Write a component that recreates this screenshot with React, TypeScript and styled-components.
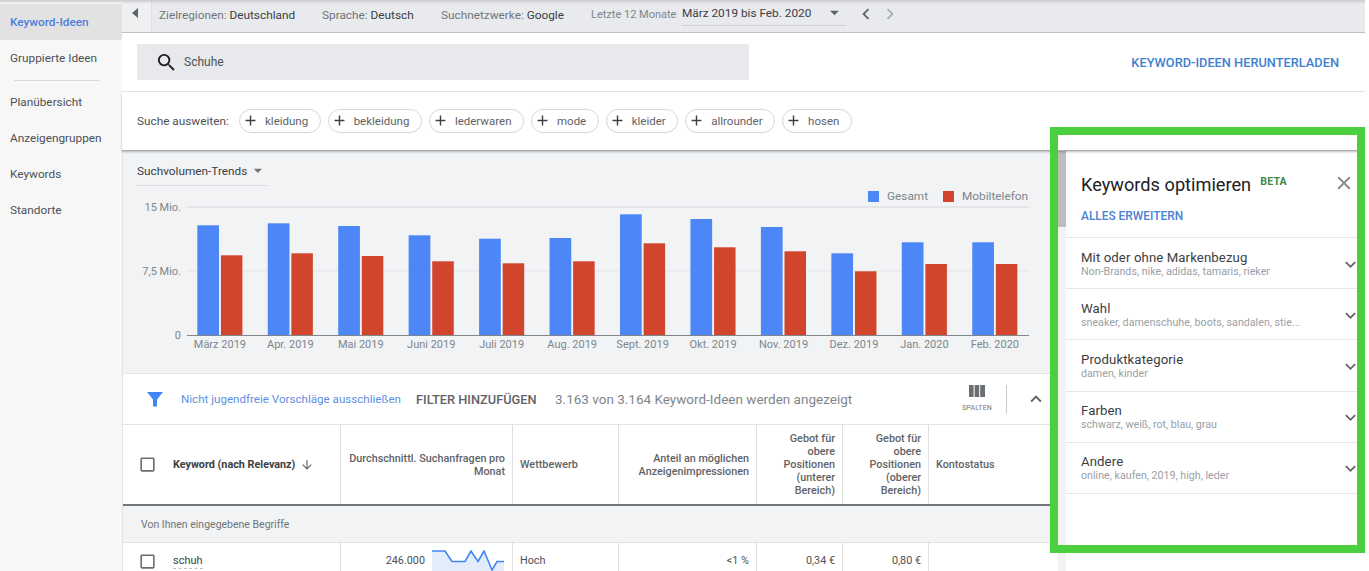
import React from "react";
import styled, { createGlobalStyle } from "styled-components";
import {
  MdAdd,
  MdArrowDownward,
  MdArrowDropDown,
  MdCheckBoxOutlineBlank,
  MdChevronLeft,
  MdChevronRight,
  MdClose,
  MdExpandLess,
  MdExpandMore,
  MdSearch,
} from "react-icons/md";

const GlobalStyle = createGlobalStyle`
  html, body {
    margin: 0;
    background: #ffffff;
  }
  * {
    box-sizing: border-box;
  }
`;

const navTop = ["Keyword-Ideen", "Gruppierte Ideen"];
const navBottom = ["Planübersicht", "Anzeigengruppen", "Keywords", "Standorte"];
const chips = ["kleidung", "bekleidung", "lederwaren", "mode", "kleider", "allrounder", "hosen"];

const months = [
  { label: "März 2019", blue: 225.3, red: 255.3 },
  { label: "Apr. 2019", blue: 223.3, red: 253.3 },
  { label: "Mai 2019", blue: 226, red: 256 },
  { label: "Juni 2019", blue: 235.3, red: 261.3 },
  { label: "Juli 2019", blue: 238.7, red: 263.3 },
  { label: "Aug. 2019", blue: 238, red: 261.3 },
  { label: "Sept. 2019", blue: 214.3, red: 243.3 },
  { label: "Okt. 2019", blue: 219, red: 247.3 },
  { label: "Nov. 2019", blue: 227, red: 251.3 },
  { label: "Dez. 2019", blue: 253.3, red: 271.3 },
  { label: "Jan. 2020", blue: 242.3, red: 264 },
  { label: "Feb. 2020", blue: 242.3, red: 264 },
];

const groups = [
  { title: "Mit oder ohne Markenbezug", sub: "Non-Brands, nike, adidas, tamaris, rieker" },
  { title: "Wahl", sub: "sneaker, damenschuhe, boots, sandalen, stie..." },
  { title: "Produktkategorie", sub: "damen, kinder" },
  { title: "Farben", sub: "schwarz, weiß, rot, blau, grau" },
  { title: "Andere", sub: "online, kaufen, 2019, high, leder" },
];

function TrendChart() {
  // coordinates are page y minus the svg top (200)
  const base = 135;
  return (
    <ChartSvg width="935" height="165" viewBox="0 0 935 165">
      <line x1="64" x2="906" y1="7" y2="7" stroke="#d5d7da" />
      <line x1="64" x2="906" y1="71" y2="71" stroke="#e3e5e8" />
      {[
        ["15 Mio.", 7],
        ["7,5 Mio.", 71],
        ["0", 135],
      ].map(([text, y]) => (
        <text key={text} x="58" y={Number(y) + 4} textAnchor="end" fontSize="11" fill="#80868b">
          {text}
        </text>
      ))}
      {months.map((m, i) => {
        const x = 74.3 + i * 70.45;
        const blueTop = m.blue - 200;
        const redTop = m.red - 200;
        return (
          <g key={m.label}>
            <rect x={x} y={blueTop} width="21.7" height={base - blueTop} fill="#4d86f7" />
            <rect x={x + 23.6} y={redTop} width="21.5" height={base - redTop} fill="#d0452b" />
            <text x={x + 22.6} y="148" textAnchor="middle" fontSize="11" fill="#80868b">
              {m.label}
            </text>
          </g>
        );
      })}
      <line x1="64" x2="906" y1="135.5" y2="135.5" stroke="#80868b" />
    </ChartSvg>
  );
}

function Sparkline() {
  return (
    <SparkSvg width="72" height="28" viewBox="0 0 72 28">
      <path
        d="M0 1H13L20 11.5H33L39 1L46 11.5L52 1L60 20L65 11.5H72V28H0Z"
        fill="#e3ecfb"
      />
      <path
        d="M0 1H13L20 11.5H33L39 1L46 11.5L52 1L60 20L65 11.5H72"
        fill="none"
        stroke="#4285f4"
        strokeWidth="1.6"
      />
    </SparkSvg>
  );
}

export default function App() {
  return (
    <Page>
      <GlobalStyle />
      <Sidebar>
        {navTop.map((item, i) => (
          <NavItem key={item} $active={i === 0}>
            {item}
          </NavItem>
        ))}
        <NavDivider />
        {navBottom.map((item) => (
          <NavItem key={item}>{item}</NavItem>
        ))}
      </Sidebar>

      <Main>
        <TopBar>
          <CollapseButton>
            <CollapseArrow />
          </CollapseButton>
          <TopInfo $width={163}>
            <TopLabel>Zielregionen:</TopLabel> Deutschland
          </TopInfo>
          <TopInfo $width={119}>
            <TopLabel>Sprache:</TopLabel> Deutsch
          </TopInfo>
          <TopInfo $width={150}>
            <TopLabel>Suchnetzwerke:</TopLabel> Google
          </TopInfo>
          <RangeLabel>Letzte 12 Monate</RangeLabel>
          <RangeSelect>
            März 2019 bis Feb. 2020
            <MdArrowDropDown size={21} color="#5f6368" />
          </RangeSelect>
          <PagerIcon $dim={false}>
            <MdChevronLeft size={22} />
          </PagerIcon>
          <PagerIcon $dim>
            <MdChevronRight size={22} />
          </PagerIcon>
        </TopBar>

        <SearchRow>
          <SearchBox>
            <MdSearch size={23} color="#202124" />
            <span>Schuhe</span>
          </SearchBox>
          <DownloadLink>KEYWORD-IDEEN HERUNTERLADEN</DownloadLink>
        </SearchRow>

        <ChipRow>
          <ChipLabel>Suche ausweiten:</ChipLabel>
          {chips.map((chip) => (
            <Chip key={chip}>
              <MdAdd size={17} color="#3c4043" />
              <span>{chip}</span>
            </Chip>
          ))}
        </ChipRow>

        <Body>
          <Content>
            <ChartSection>
              <ChartHead>
                <TrendSelect>
                  Suchvolumen-Trends
                  <MdArrowDropDown size={21} color="#757575" />
                </TrendSelect>
                <Legend>
                  <LegendSwatch $color="#4d86f7" />
                  <LegendText>Gesamt</LegendText>
                  <LegendSwatch $color="#d0452b" />
                  <LegendText>Mobiltelefon</LegendText>
                </Legend>
              </ChartHead>
              <TrendChart />
            </ChartSection>

            <FilterRow>
              <FunnelIcon width="18" height="16" viewBox="0 0 18 16">
                <path d="M1 1H17L11 8.5V15.5H7V8.5Z" fill="#4285f4" />
              </FunnelIcon>
              <AdultFilter>Nicht jugendfreie Vorschläge ausschließen</AdultFilter>
              <AddFilter>FILTER HINZUFÜGEN</AddFilter>
              <ResultCount>3.163 von 3.164 Keyword-Ideen werden angezeigt</ResultCount>
              <ColumnsButton>
                <svg width="16" height="12" viewBox="0 0 16 12">
                  <path d="M0 0H4.6V12H0ZM5.6 0H10.2V12H5.6ZM11.2 0H16V12H11.2Z" fill="#6b6f73" />
                </svg>
                <span>SPALTEN</span>
              </ColumnsButton>
              <FilterDivider />
              <MdExpandLess size={22} color="#5f6368" />
            </FilterRow>

            <HeaderRow>
              <KeywordHead>
                <MdCheckBoxOutlineBlank size={19} color="#6b6b6b" />
                <strong>Keyword (nach Relevanz)</strong>
                <MdArrowDownward size={14} color="#5f6368" />
              </KeywordHead>
              <HeadCell $right>Durchschnittl. Suchanfragen pro Monat</HeadCell>
              <HeadCell>Wettbewerb</HeadCell>
              <HeadCell $right>Anteil an möglichen Anzeigenimpressionen</HeadCell>
              <HeadCell $right>Gebot für obere Positionen (unterer Bereich)</HeadCell>
              <HeadCell $right>Gebot für obere Positionen (oberer Bereich)</HeadCell>
              <HeadCell $last>Kontostatus</HeadCell>
            </HeaderRow>

            <GroupRow>Von Ihnen eingegebene Begriffe</GroupRow>

            <DataRow>
              <KeywordCell>
                <MdCheckBoxOutlineBlank size={19} color="#6b6b6b" />
                <KeywordText>schuh</KeywordText>
              </KeywordCell>
              <VolumeCell>
                246.000
                <Sparkline />
              </VolumeCell>
              <DataCell>Hoch</DataCell>
              <DataCell $right>&lt;1 %</DataCell>
              <DataCell $right>0,34 €</DataCell>
              <DataCell $right>0,80 €</DataCell>
              <DataCell $last />
            </DataRow>
          </Content>

          <ScrollStrip>
            <ScrollThumb />
          </ScrollStrip>

          <SidePanel>
            <PanelHead>
              <PanelTitleRow>
                <PanelTitle>Keywords optimieren</PanelTitle>
                <BetaTag>BETA</BetaTag>
                <CloseIcon>
                  <MdClose size={22} color="#858585" />
                </CloseIcon>
              </PanelTitleRow>
              <ExpandAll>ALLES ERWEITERN</ExpandAll>
            </PanelHead>
            {groups.map((group) => (
              <GroupItem key={group.title}>
                <GroupText>
                  <GroupTitle>{group.title}</GroupTitle>
                  <GroupSub>{group.sub}</GroupSub>
                </GroupText>
                <MdExpandMore size={21} color="#5f6368" />
              </GroupItem>
            ))}
          </SidePanel>
        </Body>
      </Main>

      <GreenFrame />
    </Page>
  );
}

const Page = styled.div`
  position: relative;
  display: flex;
  width: 1365px;
  height: 571px;
  overflow: hidden;
  font-family: Roboto, "Liberation Sans", sans-serif;
  color: #3c4043;
  background: #ffffff;

  &::before {
    content: "";
    position: absolute;
    inset: 0 0 auto 0;
    height: 4px;
    background: linear-gradient(#c9cbce, rgba(201, 203, 206, 0));
    z-index: 3;
  }
`;

const GreenFrame = styled.div`
  position: absolute;
  left: 1050px;
  top: 127px;
  width: 315px;
  height: 426px;
  border: 8px solid #4ccf3f;
  z-index: 4;
`;

const Sidebar = styled.nav`
  flex: 0 0 122px;
  padding-top: 4px;
  background: #f7f7f7;
`;

const NavItem = styled.div<{ $active?: boolean }>`
  height: 36px;
  padding: 0 0 1px 10px;
  display: flex;
  align-items: center;
  font-size: 11.8px;
  color: ${({ $active }) => ($active ? "#4a7fdc" : "#4d5156")};
  background: ${({ $active }) => ($active ? "#e2e2e2" : "transparent")};
  font-weight: ${({ $active }) => ($active ? 500 : 400)};
`;

const NavDivider = styled.div`
  width: 86px;
  height: 1px;
  margin: 4px 0 3px 14px;
  background: #d9d9d9;
`;

const Main = styled.div`
  flex: 1;
  min-width: 0;
  display: flex;
  flex-direction: column;
`;

const TopBar = styled.div`
  height: 33px;
  flex: none;
  display: flex;
  align-items: center;
  background: #e8eaed;
  border-bottom: 1px solid #bdbfc2;
  font-size: 11.8px;
`;

const CollapseButton = styled.div`
  width: 30px;
  height: 32px;
  margin-right: 7px;
  display: flex;
  align-items: center;
  justify-content: center;
  background: #eff0f2;
  border-right: 1px solid #dcdee1;
`;

const CollapseArrow = styled.div`
  width: 0;
  height: 0;
  margin: -7px 3px 0 0;
  border-style: solid;
  border-width: 5.5px 6px 5.5px 0;
  border-color: transparent #5f6368 transparent transparent;
`;

const TopInfo = styled.div<{ $width: number }>`
  width: ${({ $width }) => $width}px;
  margin-top: -2px;
  color: #3c4043;
  white-space: nowrap;
`;

const TopLabel = styled.span`
  color: #70757a;
`;

const RangeLabel = styled.div`
  width: 91px;
  margin-top: -3px;
  font-size: 11px;
  color: #80868b;
  white-space: nowrap;
`;

const RangeSelect = styled.div`
  width: 164px;
  height: 25px;
  margin-top: -6px;
  padding-right: 1px;
  display: flex;
  align-items: center;
  justify-content: space-between;
  border-bottom: 1px solid #cfd1d4;
  color: #3c4043;
  white-space: nowrap;
`;

const PagerIcon = styled.div<{ $dim: boolean }>`
  display: flex;
  margin: -4px 0 0 ${({ $dim }) => ($dim ? "2px" : "9px")};
  color: ${({ $dim }) => ($dim ? "#a9acb0" : "#5f6368")};
`;

const SearchRow = styled.div`
  height: 59px;
  flex: none;
  padding: 11px 26px 0 15px;
  display: flex;
  justify-content: space-between;
  border-bottom: 1px solid #e8e8e8;
`;

const SearchBox = styled.div`
  width: 612px;
  height: 36px;
  padding-left: 18px;
  display: flex;
  align-items: center;
  gap: 6px;
  background: #e8e9ec;
  font-size: 12px;
  color: #4d5156;
`;

const DownloadLink = styled.div`
  height: 36px;
  display: flex;
  align-items: center;
  font-size: 12.8px;
  font-weight: 500;
  color: #3f7fd0;
`;

const ChipRow = styled.div`
  height: 59px;
  flex: none;
  padding: 0 0 1px 15px;
  display: flex;
  align-items: center;
  gap: 7px;
  border-bottom: 1px solid #a9abae;
  box-shadow: 0 1px 2px rgba(60, 64, 67, 0.35);
  position: relative;
  z-index: 1;
`;

const ChipLabel = styled.div`
  width: 95px;
  flex: none;
  font-size: 11.8px;
  color: #4d5156;
  white-space: nowrap;
`;

const Chip = styled.div`
  height: 24px;
  padding: 0 11.5px 0 2px;
  display: flex;
  align-items: center;
  gap: 6px;
  border: 1px solid #d4d6d9;
  border-radius: 12px;
  font-size: 11.5px;
  color: #5f6368;
`;

const Body = styled.div`
  flex: 1;
  min-height: 0;
  display: flex;
`;

const Content = styled.div`
  width: 936px;
  flex: none;
  border-left: 1px solid #e4e4e4;
`;

const ChartSection = styled.section`
  height: 223px;
  background: #f1f3f5;
  border-bottom: 1px solid #e6e6e6;
`;

const ChartHead = styled.div`
  height: 49px;
  padding: 0 30px 0 14px;
  display: flex;
  justify-content: space-between;
  align-items: flex-start;
`;

const TrendSelect = styled.div`
  width: 131px;
  height: 35px;
  padding-top: 5px;
  display: flex;
  align-items: center;
  gap: 1px;
  border-bottom: 1px solid #dadce0;
  font-size: 11.8px;
  color: #3c4043;
  white-space: nowrap;
`;

const Legend = styled.div`
  margin-top: 38px;
  display: flex;
  align-items: center;
`;

const LegendSwatch = styled.span<{ $color: string }>`
  width: 11px;
  height: 11px;
  margin-right: 8px;
  background: ${({ $color }) => $color};
`;

const LegendText = styled.span`
  font-size: 11.8px;
  line-height: 14px;
  color: #80868b;
  & + span {
    margin-left: 15px;
  }
`;

const ChartSvg = styled.svg`
  display: block;
  font-family: Roboto, "Liberation Sans", sans-serif;
`;

const FilterRow = styled.div`
  height: 51px;
  padding: 0 11px 0 23px;
  display: flex;
  align-items: center;
  border-bottom: 1px solid #e2e2e2;
`;

const FunnelIcon = styled.svg`
  flex: none;
  margin-right: 17px;
`;

const AdultFilter = styled.div`
  width: 235px;
  font-size: 11.6px;
  color: #5f8fe0;
  white-space: nowrap;
`;

const AddFilter = styled.div`
  width: 139px;
  font-size: 12.8px;
  font-weight: 500;
  color: #5f6368;
  white-space: nowrap;
`;

const ResultCount = styled.div`
  flex: 1;
  font-size: 13.5px;
  color: #80868b;
  white-space: nowrap;
`;

const ColumnsButton = styled.div`
  width: 40px;
  display: flex;
  flex-direction: column;
  align-items: center;
  gap: 7px;
  font-size: 7px;
  line-height: 9px;
  letter-spacing: 0.2px;
  color: #757575;

  svg {
    display: block;
  }
`;

const FilterDivider = styled.div`
  width: 1px;
  height: 29px;
  margin: 0 18px 0 9px;
  background: #c9cbce;
`;

const gridColumns = "218px 172px 106px 138px 86px 86px 129px";

const HeaderRow = styled.div`
  height: 81px;
  display: grid;
  grid-template-columns: ${gridColumns};
  border-bottom: 2px solid #74777a;
`;

const KeywordHead = styled.div`
  padding-left: 15px;
  display: flex;
  align-items: center;
  border-right: 1px solid #dfdfdf;
  font-size: 10.8px;
  color: #3c4043;

  strong {
    margin: 0 5px 0 16px;
    font-weight: 700;
    white-space: nowrap;
  }
`;

const HeadCell = styled.div<{ $right?: boolean; $last?: boolean }>`
  padding: 0 7px;
  display: flex;
  align-items: center;
  justify-content: ${({ $right }) => ($right ? "flex-end" : "flex-start")};
  text-align: ${({ $right }) => ($right ? "right" : "left")};
  border-right: ${({ $last }) => ($last ? "none" : "1px solid #dfdfdf")};
  font-size: 10.8px;
  line-height: 13px;
  font-weight: 500;
  color: #5f6368;
`;

const GroupRow = styled.div`
  height: 37px;
  padding-left: 18px;
  display: flex;
  align-items: center;
  background: #f1f3f4;
  border-bottom: 1px solid #e2e2e2;
  font-size: 10.5px;
  color: #70757a;
`;

const DataRow = styled.div`
  height: 40px;
  display: grid;
  grid-template-columns: ${gridColumns};
`;

const KeywordCell = styled.div`
  padding: 9px 0 0 15px;
  display: flex;
  align-items: flex-start;
  gap: 16px;
  border-right: 1px solid #dfdfdf;
`;

const KeywordText = styled.span`
  font-size: 11px;
  line-height: 14px;
  padding-top: 2px;
  color: #3c4043;
  border-bottom: 1px dashed #bdbdbd;
`;

const VolumeCell = styled.div`
  padding: 9px 8px 0 0;
  display: flex;
  justify-content: flex-end;
  align-items: flex-start;
  gap: 7px;
  border-right: 1px solid #dfdfdf;
  font-size: 10.8px;
  line-height: 18px;
  color: #4d5156;
`;

const SparkSvg = styled.svg`
  margin-top: -2px;
`;

const DataCell = styled.div<{ $right?: boolean; $last?: boolean }>`
  padding: 9px 7px 0;
  text-align: ${({ $right }) => ($right ? "right" : "left")};
  border-right: ${({ $last }) => ($last ? "none" : "1px solid #dfdfdf")};
  font-size: 10.8px;
  line-height: 18px;
  color: #4d5156;
`;

const ScrollStrip = styled.div`
  width: 8px;
  flex: none;
  background: #f1f3f4;
`;

const ScrollThumb = styled.div`
  height: 76px;
  background: #bdbdbd;
`;

const SidePanel = styled.aside`
  flex: 1;
  min-width: 0;
`;

const PanelHead = styled.div`
  height: 87px;
  padding: 22px 10px 0 15px;
  border-bottom: 1px solid #e6e6e6;
`;

const PanelTitleRow = styled.div`
  display: flex;
  align-items: center;
`;

const PanelTitle = styled.h2`
  margin: 0;
  font-size: 18.2px;
  line-height: 24px;
  font-weight: 400;
  color: #202124;
  white-space: nowrap;
`;

const BetaTag = styled.span`
  margin: -8px auto 0 9px;
  font-size: 10.6px;
  font-weight: 700;
  letter-spacing: 0.2px;
  color: #3c8a4a;
`;

const CloseIcon = styled.span`
  display: flex;
  margin: -4px 0 0 0;
`;

const ExpandAll = styled.div`
  margin-top: 12px;
  font-size: 11.9px;
  font-weight: 500;
  color: #4a7fd4;
`;

const GroupItem = styled.div`
  height: 51.2px;
  padding: 2px 4px 0 15px;
  display: flex;
  align-items: center;
  justify-content: space-between;
  border-bottom: 1px solid #e6e6e6;
`;

const GroupText = styled.div`
  display: flex;
  flex-direction: column;
`;

const GroupTitle = styled.span`
  font-size: 13.2px;
  line-height: 15px;
  letter-spacing: 0.1px;
  color: #3c4043;
`;

const GroupSub = styled.span`
  font-size: 10.7px;
  line-height: 14px;
  color: #9aa0a6;
`;
